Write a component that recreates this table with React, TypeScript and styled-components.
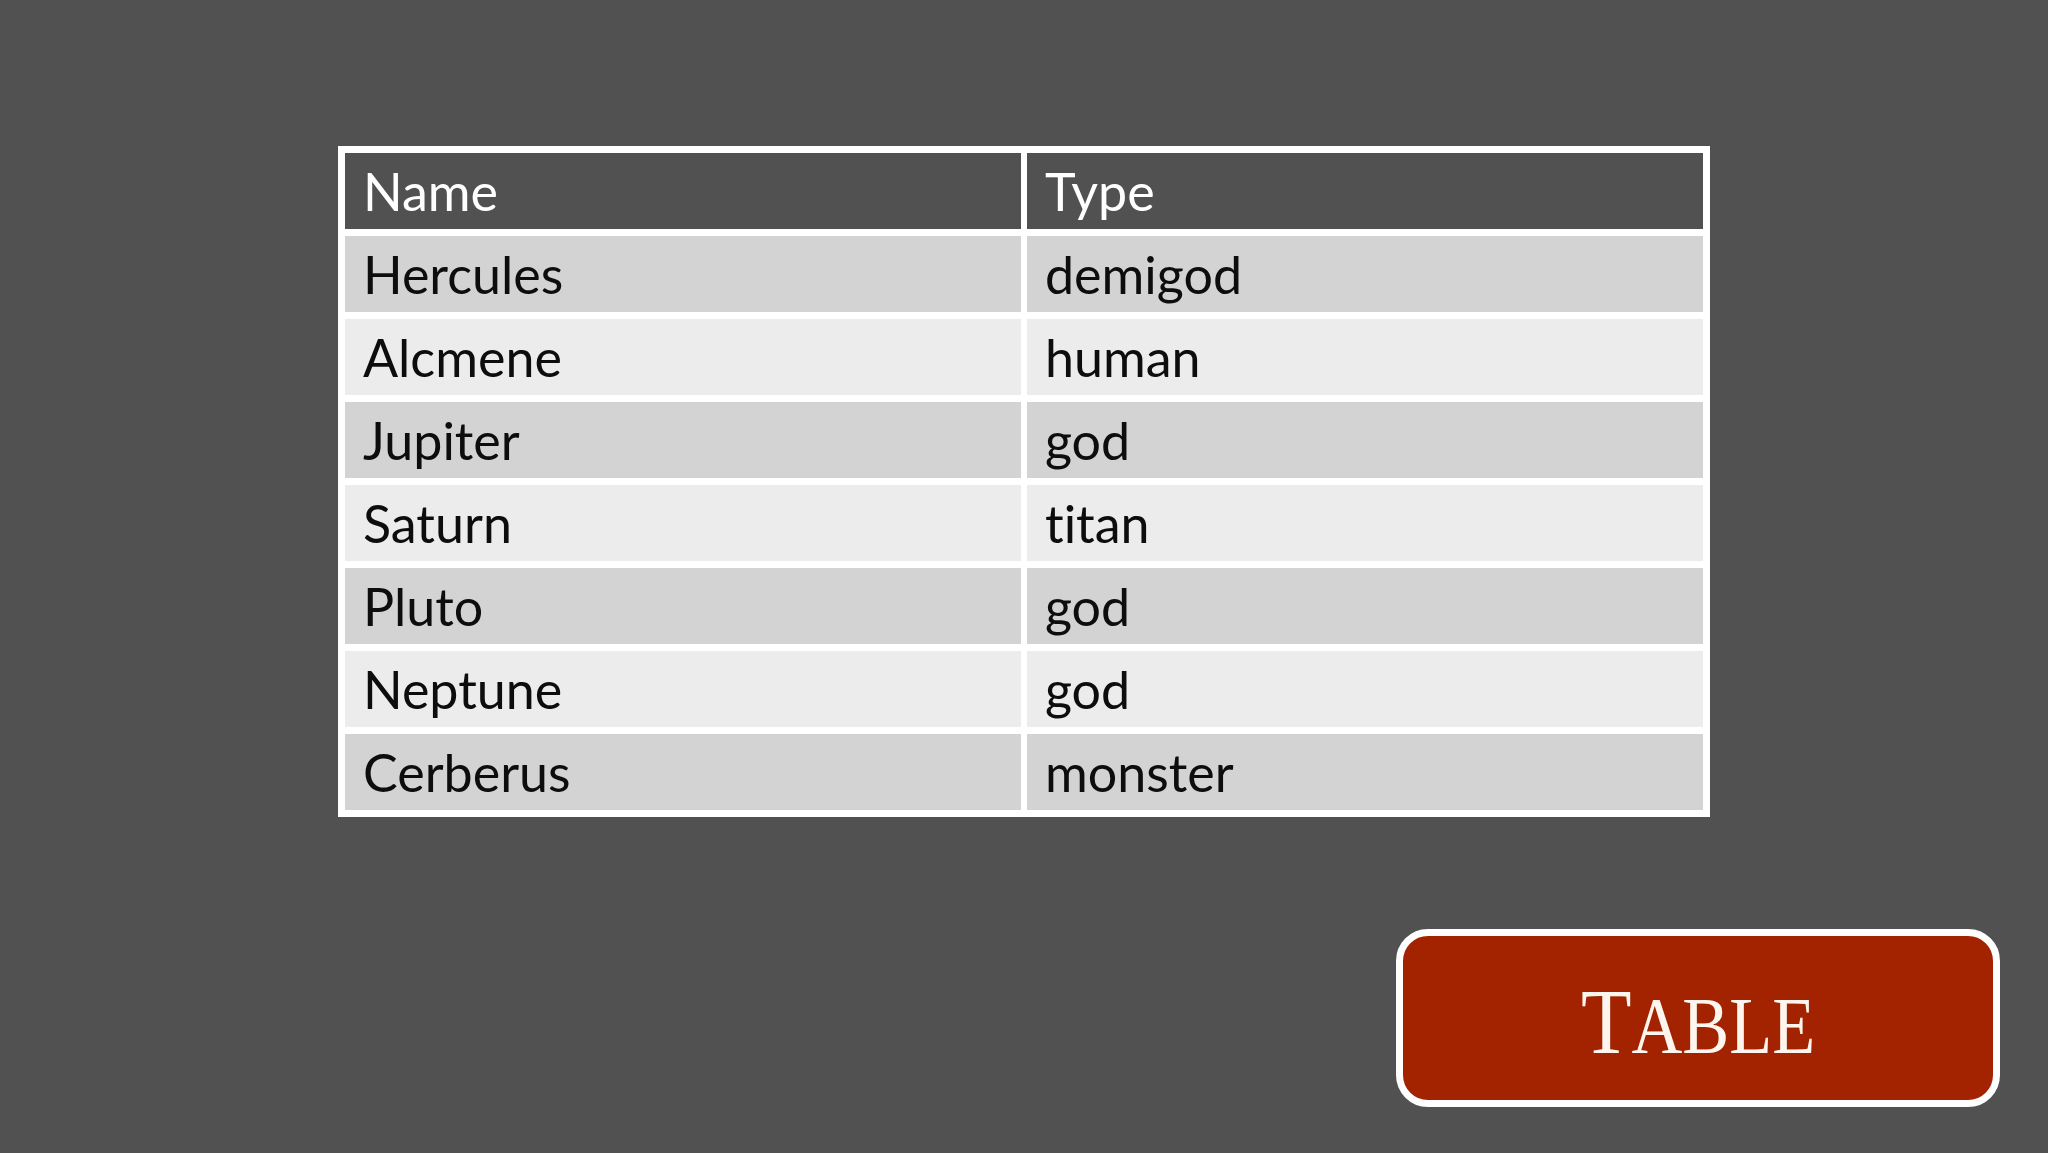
import React from 'react';
import styled, { createGlobalStyle } from 'styled-components';

const GlobalStyle = createGlobalStyle`
  html, body {
    margin: 0;
    padding: 0;
    background: #515151;
  }
`;

const Page = styled.div`
  width: 2048px;
  height: 1153px;
  box-sizing: border-box;
  padding-top: 146px;
  display: flex;
  flex-direction: column;
  align-items: center;
  background: #515151;
  font-family: Lato, "Open Sans", sans-serif;
  font-variant-ligatures: none;
  overflow: hidden;
`;

const Grid = styled.div`
  display: grid;
  grid-template-columns: 676px 676px;
  grid-auto-rows: 76px;
  column-gap: 6px;
  row-gap: 7px;
  padding: 7px;
  background: #ffffff;
`;

const Cell = styled.div<{ $tone: 'head' | 'dark' | 'light' }>`
  display: flex;
  align-items: center;
  padding-left: 18px;
  font-size: 52px;
  color: ${p => (p.$tone === 'head' ? '#ffffff' : '#0d0d0d')};
  background: ${p =>
    p.$tone === 'head' ? '#515151' : p.$tone === 'dark' ? '#d3d3d3' : '#ececec'};
`;

const Footer = styled.div`
  align-self: stretch;
  display: flex;
  justify-content: flex-end;
  padding-right: 48px;
  margin-top: 112px;
`;

const TitleButton = styled.div`
  width: 604px;
  height: 178px;
  box-sizing: border-box;
  border: 7px solid #ffffff;
  border-radius: 32px;
  background: #a32200;
  display: flex;
  align-items: center;
  justify-content: center;
`;

const Label = styled.span`
  font-family: "Liberation Serif", "DejaVu Serif", serif;
  color: #fdf6ee;
  font-size: 80px;
  line-height: 1;
  transform: scaleX(0.88);
  padding-top: 6px;
`;

const Initial = styled.span`
  font-size: 94px;
`;

const rows: [string, string][] = [
  ['Hercules', 'demigod'],
  ['Alcmene', 'human'],
  ['Jupiter', 'god'],
  ['Saturn', 'titan'],
  ['Pluto', 'god'],
  ['Neptune', 'god'],
  ['Cerberus', 'monster'],
];

const App: React.FC = () => {
  return (
    <>
      <GlobalStyle />
      <Page>
        <Grid>
          <Cell $tone="head">Name</Cell>
          <Cell $tone="head">Type</Cell>
          {rows.map(([name, type], i) => {
            const tone = i % 2 === 0 ? 'dark' : 'light';
            return (
              <React.Fragment key={name}>
                <Cell $tone={tone}>{name}</Cell>
                <Cell $tone={tone}>{type}</Cell>
              </React.Fragment>
            );
          })}
        </Grid>
        <Footer>
          <TitleButton>
            <Label>
              <Initial>T</Initial>ABLE
            </Label>
          </TitleButton>
        </Footer>
      </Page>
    </>
  );
};

export default App;
